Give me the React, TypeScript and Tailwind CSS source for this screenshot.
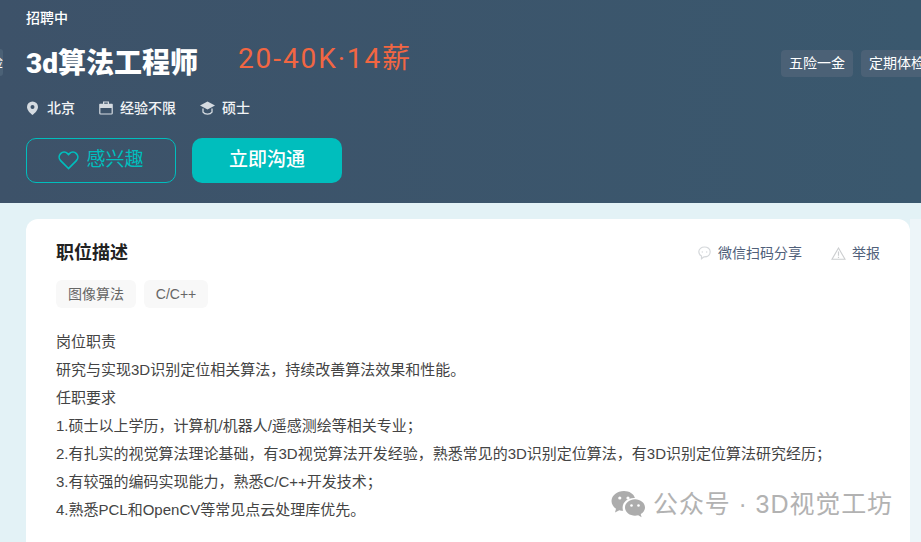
import React from "react";

const cjk = "font-['Roboto','Noto_Sans_CJK_SC',sans-serif]";
const body = "font-['Liberation_Sans','Noto_Sans_CJK_SC',sans-serif]";

function Pin() {
  return (
    <svg width="13" height="14" viewBox="0 0 13 14" className="block">
      <path fillRule="evenodd" fill="#d5dbe1" d="M6.500 0.500a5.500 5.500 0 0 1 5.500 5.500c0 3-3 6-5.500 8C4 12 1 9 1 6a5.500 5.500 0 0 1 5.500-5.500zM6.500 4a2 2 0 1 0 0 4 2 2 0 0 0 0-4z" />
    </svg>
  );
}
function Case() {
  return (
    <svg width="14" height="14" viewBox="0 0 14 14" className="block">
      <path fill="#d5dbe1" d="M4 0.500h6v2.200h3a.8.8 0 0 1 .8.8v3.500H0.200V3.500a.8.8 0 0 1 .8-.8h3zM5.200 1.600v1.100h3.600V1.600z" />
      <path fill="none" stroke="#d5dbe1" strokeWidth="1.200" d="M.8 7v5.200a.8.8 0 0 0 .8.8h10.800a.8.8 0 0 0 .8-.8V7" />
    </svg>
  );
}
function Cap() {
  return (
    <svg width="15" height="14" viewBox="0 0 15 14" className="block">
      <path fill="#d5dbe1" d="M7.500 0.500L15 4.500 7.500 8.500 0 4.500z" />
      <path fill="none" stroke="#d5dbe1" strokeWidth="1.300" d="M3 7.500v3.600c1 1.500 2.800 2.100 4.500 2.100s3.500-.6 4.500-2.100V7.500" />
    </svg>
  );
}
function Heart() {
  return (
    <svg width="21" height="19" viewBox="0 0 21 19" className="block">
      <path fill="none" stroke="#00bebd" strokeWidth="1.700" d="M10.500 17.500L2.600 9.600a5 5 0 0 1 0-7 5 5 0 0 1 7 0l.9.900.9-.900a5 5 0 0 1 7 0 5 5 0 0 1 0 7z" />
    </svg>
  );
}
function Bubble() {
  return (
    <svg width="13" height="14" viewBox="0 0 13 14" className="block">
      <path fill="none" stroke="#d4d7da" strokeWidth="1.200" d="M6.500 1C3.400 1 .8 3 .8 5.800c0 1.900 1.100 3.400 2.700 4.300v2.600l2.500-1.900h.5c3.100 0 5.700-2 5.700-5S9.600 1 6.500 1z" />
      <circle cx="4.300" cy="6" r=".7" fill="#d4d7da" />
      <circle cx="8.700" cy="6" r=".7" fill="#d4d7da" />
    </svg>
  );
}
function Warn() {
  return (
    <svg width="15" height="13" viewBox="0 0 15 13" className="block">
      <path fill="none" stroke="#ccced0" strokeWidth="1.100" d="M7.500 1L14 12.300H1z" />
      <path stroke="#ccced0" strokeWidth="1.200" d="M7.500 4.500v4.200M7.500 9.800v1.200" />
    </svg>
  );
}
function WeChat() {
  return (
    <svg width="35" height="29" viewBox="0 0 35 29" className="block">
      <path fill="#acacac" d="M13 1C6 1 .5 5.500.5 11c0 3.200 1.800 5.800 4.500 7.700L4 22.500l4.300-2.300c1.200.4 2.500.6 3.900.6-.4-1.100-.6-2.200-.6-3.300 0-5.400 5-9.600 11.300-9.600h1C22.700 3.800 18.300 1 13 1z" />
      <path fill="#acacac" d="M34 17.500c0-4.600-4.500-8.200-10-8.200s-10 3.700-10 8.200 4.500 8.200 10 8.200c1.100 0 2.200-.2 3.200-.4l3.400 2-.9-3.200c2.600-1.500 4.300-3.900 4.300-6.600z" />
      <circle cx="8.800" cy="8" r="1.600" fill="#fff" />
      <circle cx="17" cy="8" r="1.600" fill="#fff" />
      <circle cx="20.500" cy="15.500" r="1.300" fill="#fff" />
      <circle cx="27.500" cy="15.500" r="1.300" fill="#fff" />
    </svg>
  );
}

const lines = [
  "岗位职责",
  "研究与实现3D识别定位相关算法，持续改善算法效果和性能。",
  "任职要求",
  "1.硕士以上学历，计算机/机器人/遥感测绘等相关专业；",
  "2.有扎实的视觉算法理论基础，有3D视觉算法开发经验，熟悉常见的3D识别定位算法，有3D识别定位算法研究经历；",
  "3.有较强的编码实现能力，熟悉C/C++开发技术；",
  "4.熟悉PCL和OpenCV等常见点云处理库优先。",
];

export default function App() {
  return (
    <div className={`h-[542px] w-[921px] overflow-hidden bg-[#e3f2f6] ${cjk}`}>
      <header className="relative h-[203px] overflow-hidden bg-gradient-to-r from-[#3d5269] to-[#3a586e] pl-[26px]">
        <div className="absolute top-[49px] left-0 flex h-[27px] w-[3px] items-center justify-end overflow-hidden rounded-r-sm bg-[#4b6176] text-[14px] whitespace-nowrap text-white">
          检
        </div>
        <div className="pt-[9px] text-[14px] leading-[18px] font-medium text-white">招聘中</div>
        <div className="mt-[17px] flex h-[38px] items-start">
          <h1 className="pt-[2px] text-[28px] leading-[36px] font-black text-white">3d算法工程师</h1>
          <div className="ml-[40px] flex h-[30px] items-center text-[28px] leading-[30px] font-normal tracking-[1.900px] text-[#f26642]">
            20-40K·14薪
          </div>
        </div>
        <div className="mt-[16px] flex h-5 items-center text-[14px] font-medium text-[#f2f4f6]">
          <span className="flex items-center gap-[8px]"><Pin />北京</span>
          <span className="ml-[24px] flex items-center gap-[7px]"><Case />经验不限</span>
          <span className="ml-[24px] flex items-center gap-[7px]"><Cap />硕士</span>
        </div>
        <div className="mt-[20px] flex gap-4">
          <button className="flex h-[45px] w-[150px] items-center justify-center gap-[7px] rounded-[10px] border border-[#00bebd] text-[19px] text-[#00bebd]">
            <Heart />感兴趣
          </button>
          <button className="h-[45px] w-[150px] rounded-[10px] bg-[#00bebd] text-[19px] font-medium text-white">立即沟通</button>
        </div>
        <div className="absolute top-[50px] left-[781px] flex gap-2 text-[14px] whitespace-nowrap text-white">
          <span className="flex h-[27px] w-[72px] items-center justify-center rounded-[4px] bg-[#4b6176]">五险一金</span>
          <span className="flex h-[27px] items-center rounded-[4px] bg-[#4b6176] pl-2 pr-3">定期体检</span>
        </div>
      </header>
      <div className="flex h-[339px] justify-between pt-4 pl-[26px]">
        <main className={`h-[340px] w-[884px] rounded-t-[12px] bg-white px-[30px] pt-6 ${body}`}>
          <div className="flex h-5 items-center justify-between">
            <h2 className="text-[18px] leading-5 font-semibold text-[#222]">职位描述</h2>
            <div className="flex items-center text-[14px] text-[#50607a]">
              <Bubble />
              <span className="ml-[7px]">微信扫码分享</span>
              <span className="ml-[29px]"><Warn /></span>
              <span className="ml-[6px]">举报</span>
            </div>
          </div>
          <div className="mt-[17px] flex gap-2 text-[14px] text-[#666]">
            <span className="flex h-7 w-20 items-center justify-center rounded-[6px] bg-[#f8f8f8]">图像算法</span>
            <span className="flex h-7 w-16 items-center justify-center rounded-[6px] bg-[#f8f8f8]">C/C++</span>
          </div>
          <div className="mt-[20px] text-[15px] leading-7 whitespace-nowrap text-[#444]">
            {lines.map((l) => (
              <div key={l}>{l}</div>
            ))}
          </div>
        </main>
        <div className="w-[11px] bg-[#edf5f9]" />
      </div>
      <div className="absolute top-[490px] left-[611px] flex items-center gap-[7px] text-[25px] leading-[29px] tracking-[0.9px] text-[#b2b2b2]">
        <WeChat />
        <span className={body}>公众号 · 3D视觉工坊</span>
      </div>
    </div>
  );
}
